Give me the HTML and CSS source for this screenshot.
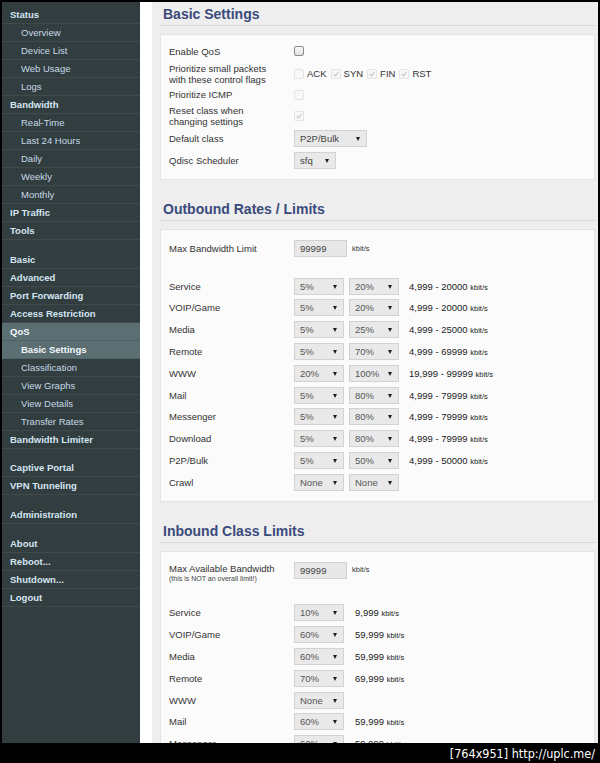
FILE: index.html
```html
<!DOCTYPE html>
<html>
<head>
<meta charset="utf-8">
<link rel="stylesheet" href="styles.css">
</head>
<body>
<div class="frame">
  <nav class="side">
    <a class="h">Status</a>
    <a class="s">Overview</a>
    <a class="s">Device List</a>
    <a class="s">Web Usage</a>
    <a class="s">Logs</a>
    <a class="h">Bandwidth</a>
    <a class="s">Real-Time</a>
    <a class="s">Last 24 Hours</a>
    <a class="s">Daily</a>
    <a class="s">Weekly</a>
    <a class="s">Monthly</a>
    <a class="h">IP Traffic</a>
    <a class="h">Tools</a>
    <div class="gap"></div>
    <a class="h">Basic</a>
    <a class="h">Advanced</a>
    <a class="h">Port Forwarding</a>
    <a class="h">Access Restriction</a>
    <a class="h active">QoS</a>
    <a class="s active">Basic Settings</a>
    <a class="s">Classification</a>
    <a class="s">View Graphs</a>
    <a class="s">View Details</a>
    <a class="s">Transfer Rates</a>
    <a class="h">Bandwidth Limiter</a>
    <div class="gap"></div>
    <a class="h">Captive Portal</a>
    <a class="h">VPN Tunneling</a>
    <div class="gap gap-md"></div>
    <a class="h">Administration</a>
    <div class="gap gap-lg"></div>
    <a class="h">About</a>
    <a class="h">Reboot...</a>
    <a class="h">Shutdown...</a>
    <a class="h">Logout</a>
  </nav>
  <main class="main">
    <div class="content">
      <section class="sec">
        <h2 class="sec-title">Basic Settings</h2>
        <div class="panel panel-basic">
          <div class="brow">
            <span class="lbl">Enable QoS</span>
            <span class="cb"></span>
          </div>
          <div class="brow">
            <span class="lbl">Prioritize small packets<br>with these control flags</span>
            <span class="flags">
              <span class="cb dis"></span><span class="flag">ACK</span>
              <span class="cb dis chk"><svg viewBox="0 0 10 10"><path d="M2 5.2 L4.2 7.4 L8 2.6"/></svg></span><span class="flag">SYN</span>
              <span class="cb dis chk"><svg viewBox="0 0 10 10"><path d="M2 5.2 L4.2 7.4 L8 2.6"/></svg></span><span class="flag">FIN</span>
              <span class="cb dis chk"><svg viewBox="0 0 10 10"><path d="M2 5.2 L4.2 7.4 L8 2.6"/></svg></span><span class="flag">RST</span>
            </span>
          </div>
          <div class="brow">
            <span class="lbl">Prioritize ICMP</span>
            <span class="cb dis"></span>
          </div>
          <div class="brow tight">
            <span class="lbl">Reset class when<br>changing settings</span>
            <span class="cb dis chk"><svg viewBox="0 0 10 10"><path d="M2 5.2 L4.2 7.4 L8 2.6"/></svg></span>
          </div>
          <div class="brow selrow">
            <span class="lbl">Default class</span>
            <span class="sel w73">P2P/Bulk</span>
          </div>
          <div class="brow selrow">
            <span class="lbl">Qdisc Scheduler</span>
            <span class="sel w42">sfq</span>
          </div>
        </div>
      </section>

      <section class="sec">
        <h2 class="sec-title">Outbound Rates / Limits</h2>
        <div class="panel">
          <div class="row">
            <span class="lbl">Max Bandwidth Limit</span>
            <span class="inp">99999</span><span class="unit">kbit/s</span>
          </div>
          <div class="rows">
            <div class="row"><span class="lbl">Service</span><span class="sel">5%</span><span class="sel">20%</span><span class="rate">4,999 - 20000 <small>kbit/s</small></span></div>
            <div class="row"><span class="lbl">VOIP/Game</span><span class="sel">5%</span><span class="sel">20%</span><span class="rate">4,999 - 20000 <small>kbit/s</small></span></div>
            <div class="row"><span class="lbl">Media</span><span class="sel">5%</span><span class="sel">25%</span><span class="rate">4,999 - 25000 <small>kbit/s</small></span></div>
            <div class="row"><span class="lbl">Remote</span><span class="sel">5%</span><span class="sel">70%</span><span class="rate">4,999 - 69999 <small>kbit/s</small></span></div>
            <div class="row"><span class="lbl">WWW</span><span class="sel">20%</span><span class="sel">100%</span><span class="rate">19,999 - 99999 <small>kbit/s</small></span></div>
            <div class="row"><span class="lbl">Mail</span><span class="sel">5%</span><span class="sel">80%</span><span class="rate">4,999 - 79999 <small>kbit/s</small></span></div>
            <div class="row"><span class="lbl">Messenger</span><span class="sel">5%</span><span class="sel">80%</span><span class="rate">4,999 - 79999 <small>kbit/s</small></span></div>
            <div class="row"><span class="lbl">Download</span><span class="sel">5%</span><span class="sel">80%</span><span class="rate">4,999 - 79999 <small>kbit/s</small></span></div>
            <div class="row"><span class="lbl">P2P/Bulk</span><span class="sel">5%</span><span class="sel">50%</span><span class="rate">4,999 - 50000 <small>kbit/s</small></span></div>
            <div class="row"><span class="lbl">Crawl</span><span class="sel">None</span><span class="sel">None</span></div>
          </div>
        </div>
      </section>

      <section class="sec">
        <h2 class="sec-title">Inbound Class Limits</h2>
        <div class="panel">
          <div class="row row-top">
            <span class="lbl">Max Available Bandwidth<small class="note">(this is NOT an overall limit!)</small></span>
            <span class="inp">99999</span><span class="unit">kbit/s</span>
          </div>
          <div class="rows rows-in">
            <div class="row"><span class="lbl">Service</span><span class="sel">10%</span><span class="rate in">9,999 <small>kbit/s</small></span></div>
            <div class="row"><span class="lbl">VOIP/Game</span><span class="sel">60%</span><span class="rate in">59,999 <small>kbit/s</small></span></div>
            <div class="row"><span class="lbl">Media</span><span class="sel">60%</span><span class="rate in">59,999 <small>kbit/s</small></span></div>
            <div class="row"><span class="lbl">Remote</span><span class="sel">70%</span><span class="rate in">69,999 <small>kbit/s</small></span></div>
            <div class="row"><span class="lbl">WWW</span><span class="sel">None</span></div>
            <div class="row"><span class="lbl">Mail</span><span class="sel">60%</span><span class="rate in">59,999 <small>kbit/s</small></span></div>
            <div class="row"><span class="lbl">Messenger</span><span class="sel">60%</span><span class="rate in">59,999 <small>kbit/s</small></span></div>
            <div class="row"><span class="lbl">Download</span><span class="sel">60%</span><span class="rate in">59,999 <small>kbit/s</small></span></div>
            <div class="row"><span class="lbl">P2P/Bulk</span><span class="sel">60%</span><span class="rate in">59,999 <small>kbit/s</small></span></div>
          </div>
        </div>
      </section>
    </div>
  </main>
</div>
<footer class="footer">[764x951] http://uplc.me/</footer>
</body>
</html>
```

FILE: styles.css
```css
* { box-sizing: border-box; }
html, body { margin: 0; padding: 0; background: #000; }
body {
  width: 600px;
  height: 763px;
  overflow: hidden;
  font-family: "Liberation Sans", Arial, sans-serif;
}

.frame {
  margin: 2px 2px 0 2px;
  height: 741px;
  display: flex;
  overflow: hidden;
  background: #fff;
}

/* ---------- sidebar ---------- */
.side {
  flex: none;
  width: 138px;
  background: #313d3f;
  padding-top: 4px;
  display: flex;
  flex-direction: column;
}
.side a {
  display: block;
  flex: none;
  height: 18px;
  line-height: 17.5px;
  border-bottom: 1px solid #3e4a4c;
  font-size: 9.5px;
  white-space: nowrap;
}
.side .h {
  padding-left: 8px;
  font-weight: bold;
  color: #d5e6f3;
}
.side .s {
  padding-left: 19px;
  color: #c8dae7;
}
.side .active {
  background: #5b6f73;
  border-bottom-color: #4f6266;
  color: #f4f8fb;
}
.side .s.active { font-weight: bold; }
.side .gap { height: 10.5px; flex: none; }
.side .gap-md { height: 11px; }
.side .gap-lg { height: 10.5px; }

/* ---------- main ---------- */
.main {
  flex: 1;
  padding-left: 12px;
  background: #fff;
  overflow: hidden;
}
.content {
  background: #eeeeee;
  min-height: 100%;
  padding: 3px 3px 0 8px;
  color: #333;
  font-size: 9.5px;
}
.sec + .sec { margin-top: 20px; }
.sec-title {
  margin: 0 0 8px 0;
  padding: 0 0 2px 3px;
  font-size: 14px;
  line-height: 18px;
  font-weight: bold;
  color: #3a4a7b;
  border-bottom: 1px solid #d7d7d7;
}
.panel {
  background: #fbfbfb;
  border: 1px solid #e3e3e3;
  padding: 8px;
}

.lbl {
  flex: none;
  width: 125px;
  line-height: 11px;
  color: #333;
}

/* basic settings rows */
.brow {
  display: flex;
  align-items: center;
  padding: 2.5px 0;
}
.brow:nth-child(2) { padding-top: 3.5px; padding-bottom: 2px; }
.brow.tight { padding-bottom: 0; }
.brow.selrow { height: 22px; }

.cb {
  flex: none;
  display: inline-block;
  width: 10px;
  height: 10px;
  border: 1px solid #8c8c8c;
  border-radius: 2px;
  background: linear-gradient(#fafafa, #dedede);
}
.cb.dis {
  border-color: #e4e4e4;
  background: #f8f8f8;
}
.cb svg {
  display: block;
  width: 8px;
  height: 8px;
}
.cb svg path {
  fill: none;
  stroke: #c8c8c8;
  stroke-width: 1.4;
}
.flags {
  display: flex;
  align-items: center;
}
.flag {
  margin: 0 4px 0 3px;
  line-height: 11px;
  color: #333;
}

/* generic rows */
.row {
  display: flex;
  align-items: center;
  height: 21.8px;
}
.row-top {
  height: auto;
  align-items: flex-start;
  padding: 2.4px 0;
}
.row-top .inp { margin-top: -1px; }
.row-top .unit { margin-top: 1.5px; }
.note {
  display: block;
  font-size: 7px;
  line-height: 10px;
  color: #444;
}
.rows { margin-top: 15.4px; }
.rows-in { margin-top: 16px; }

.sel {
  flex: none;
  position: relative;
  display: inline-block;
  width: 50px;
  height: 17px;
  line-height: 15px;
  padding-left: 5px;
  background: #e9e9e9;
  border: 1px solid #d2d2d2;
  color: #555;
  font-size: 9.5px;
}
.sel::after {
  content: "";
  position: absolute;
  right: 6px;
  top: 6px;
  border-left: 2.5px solid transparent;
  border-right: 2.5px solid transparent;
  border-top: 4px solid #1e1e1e;
}
.sel + .sel { margin-left: 5px; }
.sel.w73 { width: 73px; color: #444; }
.sel.w42 { width: 42px; color: #444; }

.inp {
  flex: none;
  display: inline-block;
  width: 53px;
  height: 17px;
  line-height: 15px;
  padding-left: 5px;
  background: #e8e8e8;
  border: 1px solid #d2d2d2;
  color: #444;
}
.unit {
  margin-left: 5px;
  font-size: 7.5px;
  line-height: 11px;
  color: #333;
}
.rate {
  margin-left: 10px;
  color: #222;
  white-space: nowrap;
}
.rate.in { margin-left: 11px; }
.rate small { font-size: 7.5px; }

/* ---------- watermark bar ---------- */
.footer {
  height: 20px;
  padding-right: 5px;
  text-align: right;
  color: #fff;
  font-family: "DejaVu Sans Condensed", "DejaVu Sans", sans-serif;
  font-size: 12.5px;
  line-height: 22px;
  white-space: nowrap;
}
```
